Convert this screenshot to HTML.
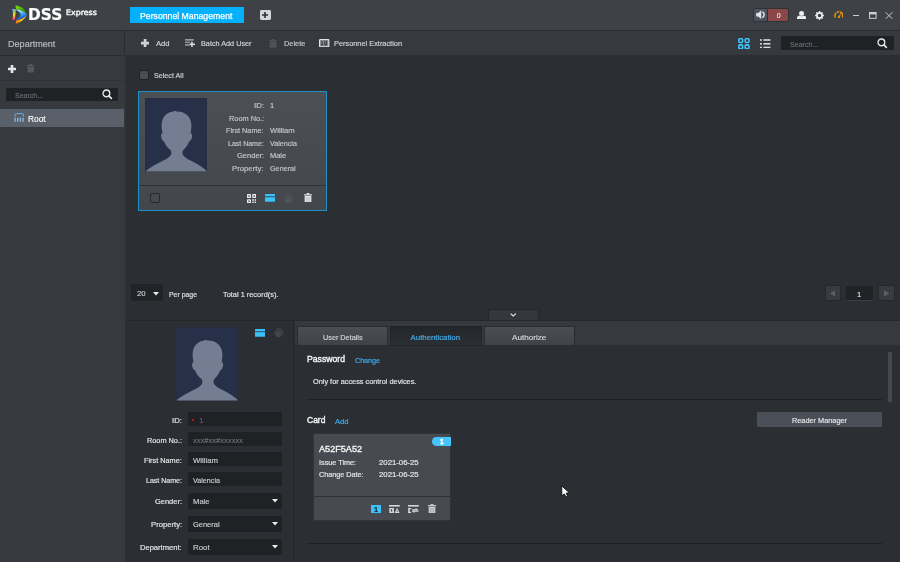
<!DOCTYPE html>
<html lang="en"><head><meta charset="utf-8"><title>DSS Express - Personnel Management</title><style>
*{margin:0;padding:0;box-sizing:content-box}
html,body{width:900px;height:562px;overflow:hidden;background:#2b2e33;font-family:'Liberation Sans', sans-serif;}
#app{position:absolute;left:0;top:0;width:900px;height:562px;overflow:hidden;will-change:transform}
.b{position:absolute;display:block}
.t{-webkit-text-stroke:0.18px currentColor;position:absolute;transform-origin:0 50%;display:block;white-space:pre;font-family:'Liberation Sans', sans-serif;font-weight:400;font-style:normal;background:none;border:0;text-decoration:none}
</style></head>
<body>
<div id="app">
<header><div class="b" style="left:0px;top:0px;width:900px;height:30.3px;background:#3e4146;"></div><svg class="b" style="left:12px;top:5px;" width="15.4" height="19" viewBox="0 0 15.4 19"><defs><linearGradient id="lg1" x1="0" y1="0" x2="1" y2="1"><stop offset="0" stop-color="#8ee000"/><stop offset="0.6" stop-color="#3aa008"/><stop offset="1" stop-color="#1c6a10"/></linearGradient><linearGradient id="lg2" x1="0.3" y1="0" x2="0.6" y2="1"><stop offset="0" stop-color="#b4f4f8"/><stop offset="0.5" stop-color="#38a0f0"/><stop offset="1" stop-color="#0638d8"/></linearGradient><linearGradient id="lg3" x1="1" y1="0" x2="0" y2="1"><stop offset="0" stop-color="#f8e820"/><stop offset="0.5" stop-color="#f8c018"/><stop offset="1" stop-color="#f06410"/></linearGradient><linearGradient id="lg4" x1="0.3" y1="0" x2="0.5" y2="1"><stop offset="0" stop-color="#5ea8f4"/><stop offset="0.3" stop-color="#9ac86a"/><stop offset="0.55" stop-color="#f4dc1c"/><stop offset="0.8" stop-color="#f07a40"/><stop offset="1" stop-color="#d818a4"/></linearGradient></defs><path d="M3.4,0.5 C8.5,0.6 13,4 15.1,9.2 L13.6,8.5 C11.5,6 8,4.3 4.1,4 Z" fill="url(#lg1)"/><path d="M4.3,4.3 C8,4.6 12,6.3 15.1,9.5 C12.5,12.6 8.5,14.5 4.3,14.9 L4.5,13.8 C7,12.8 8.5,11.2 8.5,9.5 C8.5,7.8 7,6.2 4.5,5.2 Z" fill="url(#lg2)"/><path d="M14.7,10.3 C12.5,14.6 8.5,17.8 3.6,18.8 L4.2,15.5 C8.4,15 12,13.2 14.7,10.3 Z" fill="url(#lg3)"/><path d="M0.2,4 L3.8,3.9 L3.1,15.2 L0.5,14.9 C1.2,11 1.2,7 0.2,4 Z" fill="url(#lg4)"/></svg><span class="t" style="left:28.40px;top:6.00px;font-size:15.1px;line-height:18px;color:#ffffff;font-weight:700;font-family:'DejaVu Sans', 'Liberation Sans', sans-serif;transform:scaleX(1.0180);">DSS</span><span class="t" style="left:65.80px;top:8.00px;font-size:7.5px;line-height:9px;color:#f4f4f4;font-family:'DejaVu Sans', 'Liberation Sans', sans-serif;-webkit-text-stroke:0.4px #f4f4f4;transform:scaleX(1.0513);">Express</span><div class="b tab" style="left:130px;top:7px;width:114px;height:16.2px;background:#05b1fa;"></div><span class="t" style="left:140.40px;top:11.00px;font-size:9.2px;line-height:10px;color:#ffffff;-webkit-text-stroke:0.25px #fff;transform:scaleX(0.9471);">Personnel Management</span><div class="b" style="left:260.2px;top:10.2px;width:10.4px;height:9.8px;background:#d3d6da;border-radius:1.4px;"></div><svg class="b" style="left:262.4px;top:12.1px;" width="6" height="6" viewBox="0 0 6 6"><path d="M2.2,0H3.8V2.2H6V3.8H3.8V6H2.2V3.8H0V2.2H2.2Z" fill="#2e3136"/></svg><div class="b" style="left:753.6px;top:8.6px;width:14.4px;height:12.8px;background:#4b535d;border-radius:1.5px 0 0 1.5px;box-shadow:0 0 0 1px #2e3135;"></div><div class="b" style="left:768px;top:8.6px;width:20.2px;height:12.8px;background:#8b4747;border-radius:0 1.5px 1.5px 0;box-shadow:0 0 0 1px #2e3135;"></div><svg class="b" style="left:755.6px;top:10.4px;" width="10.4" height="9.4" viewBox="0 0 10.4 9.4"><path d="M0.2,3H2.2L5.2,0.3V9.1L2.2,6.4H0.2Z" fill="#e2e5e8"/><path d="M6.8,2.2C8.6,3.4 8.6,6 6.8,7.2" fill="none" stroke="#e2e5e8" stroke-width="1.5" stroke-linecap="round"/></svg><span class="t" style="left:776.65px;top:12.00px;font-size:7.0px;line-height:7px;color:#eadada;">0</span><svg class="b" style="left:796.6px;top:10.6px;" width="9.2" height="8.6" viewBox="0 0 9.2 8.6"><circle cx="4.6" cy="2.5" r="2.5" fill="#eceef0"/><path d="M0,8.6V6.6C0,5.2 1.6,4.6 2.8,4.4C3.8,5.4 5.4,5.4 6.4,4.4C7.6,4.6 9.2,5.2 9.2,6.6V8.6Z" fill="#eceef0"/></svg><svg class="b" style="left:815.4px;top:10.7px;" width="9" height="9" viewBox="0 0 9 9"><path d="M8.92,4.01L8.92,4.99L7.86,5.48L7.57,6.19L7.97,7.28L7.28,7.97L6.19,7.57L5.48,7.86L4.99,8.92L4.01,8.92L3.52,7.86L2.81,7.57L1.72,7.97L1.03,7.28L1.43,6.19L1.14,5.48L0.08,4.99L0.08,4.01L1.14,3.52L1.43,2.81L1.03,1.72L1.72,1.03L2.81,1.43L3.52,1.14L4.01,0.08L4.99,0.08L5.48,1.14L6.19,1.43L7.28,1.03L7.97,1.72L7.57,2.81L7.86,3.52Z" fill="#eceef0"/><circle cx="4.5" cy="4.5" r="1.7" fill="#3e4146"/></svg><svg class="b" style="left:833.8px;top:11.4px;" width="9.6" height="7" viewBox="0 0 9.6 7"><path d="M1.2,6.6C0.2,3.4 2,0.8 4.8,0.8S9.4,3.4 8.4,6.6" fill="none" stroke="#e9930c" stroke-width="1.5" stroke-dasharray="5.2 0.8 2.4 0.8 20"/><path d="M3.9,6.2L7.2,1.6L5.7,6.9Z" fill="#e9930c"/><circle cx="4.8" cy="6.2" r="1" fill="#e9930c"/></svg><div class="b" style="left:853px;top:15.3px;width:6.4px;height:1.2px;background:#cdd0d8;"></div><svg class="b" style="left:868.8px;top:12px;" width="7.8" height="6.8" viewBox="0 0 7.8 6.8"><rect x="0.5" y="0.5" width="6.6" height="5.8" fill="none" stroke="#cdd0d8" stroke-width="1"/><rect x="0.5" y="0.5" width="6.6" height="1.9" fill="#cdd0d8"/></svg><svg class="b" style="left:884.8px;top:11.6px;" width="8" height="7.2" viewBox="0 0 8 7.2"><path d="M0.4,0.2L7.6,7M7.6,0.2L0.4,7" stroke="#d4d7de" stroke-width="0.9" fill="none"/></svg></header>
<div class="b" style="left:0px;top:30.3px;width:900px;height:1.1px;background:#292b2f;"></div>
<nav><div class="b" style="left:125px;top:31.3px;width:775px;height:23.7px;background:#36393e;"></div><svg class="b" style="left:140.8px;top:38.6px;" width="8.2" height="8.2" viewBox="0 0 8.2 8.2"><path d="M2.73,0H5.47V2.73H8.2V5.47H5.47V8.2H2.73V5.47H0V2.73H2.73Z" fill="#cfd2d8"/></svg><button class="t" style="left:155.90px;top:39.00px;font-size:7.8px;line-height:9px;color:#d0d3d7;transform:scaleX(0.9802);">Add</button><svg class="b" style="left:185px;top:38.6px;" width="10.2" height="8.6" viewBox="0 0 10.2 8.6"><g fill="#d6d9dd"><rect x="0" y="0.4" width="8.8" height="1.0"/><rect x="0" y="2.7" width="5" height="1.1" opacity="0.75"/><rect x="0" y="5.45" width="4.6" height="1.0"/><rect x="4.6" y="4.5" width="5.5" height="1.6"/><rect x="6.1" y="2.7" width="1.7" height="5.2"/></g></svg><button class="t" style="left:201.20px;top:39.00px;font-size:7.8px;line-height:9px;color:#d0d3d7;transform:scaleX(0.9319);">Batch Add User</button><svg class="b" style="left:268.8px;top:38.8px;" width="8" height="8.8" viewBox="0 0 8 8.8"><g fill="#50545c"><rect x="2.64" y="0" width="2.72" height="1.23"/><rect x="0" y="1.06" width="8" height="1.23" rx="0.4"/><path d="M0.64,2.82H7.36V8.00Q7.36,8.8 6.56,8.8H1.44Q0.64,8.8 0.64,8.00Z"/></g><g stroke="#474a4f" stroke-width="0.5" opacity="0.55"><line x1="2.88" y1="3.70" x2="2.88" y2="7.92"/><line x1="5.12" y1="3.70" x2="5.12" y2="7.92"/></g></svg><button class="t" style="left:283.60px;top:39.00px;font-size:7.8px;line-height:9px;color:#c2c6cb;transform:scaleX(0.9491);">Delete</button><svg class="b" style="left:319.2px;top:38.6px;" width="10.4" height="8.4" viewBox="0 0 10.4 8.4"><rect x="0.55" y="0.55" width="9.3" height="7.3" rx="0.8" fill="#84888f" stroke="#e2e4e7" stroke-width="1.1"/><rect x="2.5" y="2" width="1.1" height="4.2" fill="#3a3d42"/><rect x="2.1" y="5.2" width="1.9" height="1" fill="#3a3d42"/><rect x="5.3" y="1.9" width="2.7" height="4.3" fill="#3a3d42"/><rect x="6.3" y="1.9" width="0.7" height="3" fill="#84888f"/></svg><button class="t" style="left:334.00px;top:39.00px;font-size:7.8px;line-height:9px;color:#d0d3d7;transform:scaleX(0.9451);">Personnel Extraction</button><svg class="b" style="left:737.5px;top:37.6px;" width="12" height="11.4" viewBox="0 0 12 11.4"><g fill="none" stroke="#3fc4fb" stroke-width="1.55"><rect x="0.8" y="0.8" width="3.8" height="3.7" rx="0.9"/><rect x="7.2" y="0.8" width="3.8" height="3.7" rx="0.9"/><rect x="0.8" y="6.9" width="3.8" height="3.7" rx="0.9"/><rect x="7.2" y="6.9" width="3.8" height="3.7" rx="0.9"/></g></svg><svg class="b" style="left:760px;top:38.8px;" width="10.6" height="9.6" viewBox="0 0 10.6 9.6"><g fill="#d8dbe0"><rect x="0" y="0.2" width="1.9" height="1.6"/><rect x="3.4" y="0.2" width="7" height="1.6"/><rect x="0" y="4" width="1.9" height="1.6"/><rect x="3.4" y="4" width="7" height="1.6"/><rect x="0" y="7.7" width="1.9" height="1.6"/><rect x="3.4" y="7.7" width="7" height="1.6"/></g></svg><div class="b" style="left:781px;top:36.4px;width:112.8px;height:13.6px;background:#1f2125;border-radius:1.5px;"></div><span class="t" style="left:790.00px;top:40.00px;font-size:7.9px;line-height:9px;color:#686d75;transform:scaleX(0.8962);">Search...</span><svg class="b" style="left:877px;top:38.4px;" width="11" height="11" viewBox="0 0 11 11"><circle cx="4.4" cy="4.4" r="3.4" fill="none" stroke="#e8eaec" stroke-width="1.3"/><line x1="7.1" y1="7.1" x2="9.4" y2="9.4" stroke="#e8eaec" stroke-width="1.6" stroke-linecap="round"/></svg></nav>
<aside><div class="b" style="left:0px;top:31.3px;width:125px;height:530.7px;background:#36393e;"></div><div class="b" style="left:0px;top:31.3px;width:125px;height:23.7px;background:#36393e;"></div><div class="b" style="left:124.4px;top:31.3px;width:1.0px;height:24px;background:#292b2f;"></div><div class="b" style="left:124.5px;top:55.3px;width:1.0px;height:506.7px;background:#2e3136;"></div><h2 class="t" style="left:8.20px;top:39.00px;font-size:9.2px;line-height:10px;color:#b9bdc3;transform:scaleX(0.9872);">Department</h2><div class="b" style="left:0px;top:54.8px;width:124.4px;height:1px;background:#2a2c30;"></div><svg class="b" style="left:8px;top:64.6px;" width="8" height="8" viewBox="0 0 8 8"><path d="M2.67,0H5.33V2.67H8V5.33H5.33V8H2.67V5.33H0V2.67H2.67Z" fill="#e4e6e8"/></svg><svg class="b" style="left:27.2px;top:64.4px;" width="7.4" height="8.6" viewBox="0 0 7.4 8.6"><g fill="#565a62"><rect x="2.44" y="0" width="2.52" height="1.20"/><rect x="0" y="1.03" width="7.4" height="1.20" rx="0.4"/><path d="M0.59,2.75H6.81V7.80Q6.81,8.6 6.07,8.6H1.33Q0.59,8.6 0.59,7.80Z"/></g><g stroke="#474a4f" stroke-width="0.5" opacity="0.55"><line x1="2.66" y1="3.61" x2="2.66" y2="7.74"/><line x1="4.74" y1="3.61" x2="4.74" y2="7.74"/></g></svg><div class="b" style="left:0px;top:80px;width:124px;height:1px;background:#2f3236;"></div><div class="b" style="left:5.8px;top:88px;width:112.6px;height:13px;background:#1f2125;border-radius:1.5px;"></div><span class="t" style="left:15.00px;top:91.00px;font-size:7.9px;line-height:9px;color:#686d75;transform:scaleX(0.8867);">Search...</span><svg class="b" style="left:101.8px;top:89.4px;" width="11" height="11" viewBox="0 0 11 11"><circle cx="4.4" cy="4.4" r="3.4" fill="none" stroke="#e8eaec" stroke-width="1.3"/><line x1="7.1" y1="7.1" x2="9.4" y2="9.4" stroke="#e8eaec" stroke-width="1.6" stroke-linecap="round"/></svg><div class="b" style="left:0px;top:108.5px;width:124.4px;height:18.3px;background:#5a606a;"></div><svg class="b" style="left:13.6px;top:113.2px;" width="10.4" height="9" viewBox="0 0 10.4 9"><path d="M1,3.5V2Q1,0.6 2.4,0.6H8Q9.4,0.6 9.4,2V3.5" fill="none" stroke="#67aee8" stroke-width="1"/><g fill="#86bdec"><rect x="0.4" y="4.7" width="1.3" height="4.1"/><rect x="3.1" y="4.7" width="1.3" height="4.1"/><rect x="5.8" y="4.7" width="1.3" height="4.1"/><rect x="8.5" y="4.7" width="1.3" height="4.1"/></g></svg><span class="t" style="left:27.80px;top:113.00px;font-size:9.4px;line-height:11px;color:#f4f5f6;transform:scaleX(0.8934);">Root</span></aside>
<main><div class="b" style="left:140.4px;top:70.8px;width:7.8px;height:7.8px;background:#484c55;box-shadow:0 0 0 1px #202226;border-radius:1.2px;"></div><label class="t" style="left:153.80px;top:71.00px;font-size:7.8px;line-height:9px;color:#d0d3d7;transform:scaleX(0.9196);">Select All</label><div class="b" style="left:138px;top:91px;width:189px;height:119.6px;background:#474a4f;box-sizing:border-box;border:1px solid #1c90c8;background:linear-gradient(#4c4f54,#43464b);"></div><div class="b" style="left:139px;top:184.6px;width:187px;height:1px;background:#2e3135;"></div><svg class="b" style="left:145px;top:98px;" width="62" height="74" viewBox="0 0 62 74"><rect width="62" height="74" fill="#273049"/><path d="M0.7,74 L0.7,72.5 C5,69.3 11,65.6 16,63.2 C21,60.8 25,59 26.3,55.5 C26.5,54 26.3,52.5 25.5,51.5 C22.5,49 20.3,46.5 19.2,43.2 C17,42.5 15.6,39 16.2,36.2 C16.4,35.2 17,34.8 17.6,34.8 C16.4,30 16.2,26 17.2,22.5 C18.6,17 23,13.6 27.5,13.2 C28.5,12.5 30.5,12.4 31.5,13 C37,12.6 43.5,15.5 45.6,22 C46.8,26 46.6,30 45.6,34.8 C46.4,34.8 46.9,35.4 47,36.2 C47.5,39 46,42.5 44,43.2 C42.8,46.5 40.8,49 38.3,51.5 C37.5,52.5 37.3,54 37.6,55.5 C39,59 43,60.8 48,63.2 C53,65.6 58,69.3 62,72.5 L62,74 Z" fill="#737e93" transform="translate(0,0.5)"/><rect x="0.25" y="0.25" width="61.5" height="73.5" fill="none" stroke="#2a2d38" stroke-width="0.5"/></svg><span class="t" style="left:253.70px;top:101.00px;font-size:7.6px;line-height:9px;color:#c3c6cb;transform:scaleX(1.0392);">ID:</span><span class="t" style="left:270.03px;top:101.00px;font-size:7.6px;line-height:9px;color:#c3c6cb;">1</span><span class="t" style="left:228.70px;top:114.00px;font-size:7.6px;line-height:9px;color:#c3c6cb;transform:scaleX(0.9670);">Room No.:</span><span class="t" style="left:226.30px;top:126.00px;font-size:7.6px;line-height:9px;color:#c3c6cb;transform:scaleX(0.9554);">First Name:</span><span class="t" style="left:270.30px;top:126.00px;font-size:7.6px;line-height:9px;color:#c3c6cb;transform:scaleX(1.0054);">William</span><span class="t" style="left:228.00px;top:139.00px;font-size:7.6px;line-height:9px;color:#c3c6cb;transform:scaleX(0.9216);">Last Name:</span><span class="t" style="left:270.30px;top:139.00px;font-size:7.6px;line-height:9px;color:#c3c6cb;transform:scaleX(0.9413);">Valencia</span><span class="t" style="left:236.60px;top:151.00px;font-size:7.6px;line-height:9px;color:#c3c6cb;transform:scaleX(0.9908);">Gender:</span><span class="t" style="left:270.30px;top:151.00px;font-size:7.6px;line-height:9px;color:#c3c6cb;transform:scaleX(0.9715);">Male</span><span class="t" style="left:232.40px;top:164.00px;font-size:7.6px;line-height:9px;color:#c3c6cb;transform:scaleX(1.0191);">Property:</span><span class="t" style="left:270.30px;top:164.00px;font-size:7.6px;line-height:9px;color:#c3c6cb;transform:scaleX(0.9508);">General</span><div class="b" style="left:151px;top:194px;width:7.6px;height:7.8px;background:#454952;box-shadow:0 0 0 1px #26282c;border-radius:1.2px;"></div><svg class="b" style="left:246.8px;top:193.6px;" width="9.4" height="9.2" viewBox="0 0 9.4 9.2"><g fill="#e4e6e8"><rect x="0" y="0" width="4" height="4" rx="0.6"/><rect x="5.2" y="0" width="4" height="4" rx="0.6"/><rect x="0" y="5.2" width="4" height="4" rx="0.6"/><rect x="5.2" y="5.2" width="1.6" height="1.6"/><rect x="7.6" y="5.2" width="1.6" height="1.6"/><rect x="5.2" y="7.6" width="1.6" height="1.6"/><rect x="7.6" y="7.6" width="1.6" height="1.6"/></g><g fill="#474a4f"><rect x="1.3" y="1.3" width="1.4" height="1.4"/><rect x="6.5" y="1.3" width="1.4" height="1.4"/><rect x="1.3" y="6.5" width="1.4" height="1.4"/></g></svg><svg class="b" style="left:264.8px;top:194.2px;" width="10.4" height="7.8" viewBox="0 0 10.4 7.8"><rect width="10.4" height="7.8" rx="0.5" fill="#3cc0f8"/><rect y="2.26" width="10.4" height="0.94" fill="#2b2e33" opacity="0.8"/></svg><svg class="b" style="left:284px;top:193.6px;" width="9.4" height="9.4" viewBox="0 0 9.4 9.4"><g fill="none" stroke="#5b5f67" stroke-width="0.65" stroke-linecap="round"><path d="M1,6.6C0.4,3 2,0.6 4.7,0.6S9,3 8.4,6.6"/><path d="M2.6,8C2,4.6 2.8,2.3 4.7,2.3S7.4,4.6 6.8,8"/><path d="M4.7,4V8.8"/><path d="M3.6,8.8C3.3,7 3.4,5 4,4"/><path d="M5.8,8.8C6.1,7 6,5 5.4,4"/></g></svg><svg class="b" style="left:303.6px;top:192.9px;" width="8.0" height="9.6" viewBox="0 0 8.0 9.6"><g fill="#e0e2e5"><rect x="2.64" y="0" width="2.72" height="1.34"/><rect x="0" y="1.15" width="8.0" height="1.34" rx="0.4"/><path d="M0.64,3.07H7.36V8.80Q7.36,9.6 6.56,9.6H1.44Q0.64,9.6 0.64,8.80Z"/></g><g stroke="#474a4f" stroke-width="0.5" opacity="0.55"><line x1="2.88" y1="4.03" x2="2.88" y2="8.64"/><line x1="5.12" y1="4.03" x2="5.12" y2="8.64"/></g></svg><div class="b" style="left:131.4px;top:284px;width:31.4px;height:16.6px;background:#212327;border-radius:1.5px;"></div><span class="t" style="left:137.40px;top:289.00px;font-size:7.9px;line-height:9px;color:#c6cad0;transform:scaleX(0.9794);">20</span><svg class="b" style="left:153px;top:291.8px;" width="6" height="4" viewBox="0 0 6 4"><path d="M0,0H6L3,3.6Z" fill="#e8eaec"/></svg><span class="t" style="left:169.40px;top:290.00px;font-size:7.8px;line-height:9px;color:#dfe1e4;transform:scaleX(0.8845);">Per page</span><span class="t" style="left:222.60px;top:290.00px;font-size:7.8px;line-height:9px;color:#dfe1e4;transform:scaleX(0.9470);">Total 1 record(s).</span><div class="b" style="left:825.6px;top:285.8px;width:14px;height:14.6px;background:#383b40;box-shadow:0 0 0 1px #25272b;"></div><svg class="b" style="left:829.6px;top:289.6px;" width="5.4" height="6.8" viewBox="0 0 5.4 6.8"><path d="M5.4,0V6.8L0,3.4Z" fill="#5a5e66"/></svg><div class="b" style="left:846px;top:285.8px;width:26.6px;height:14.6px;background:#202226;border-radius:1.5px;box-shadow:0 1px 0 0 #3a3d42;"></div><span class="t" style="left:856.93px;top:290.00px;font-size:7.8px;line-height:9px;color:#d5d8dc;">1</span><div class="b" style="left:879px;top:285.8px;width:14.6px;height:14.6px;background:#383b40;box-shadow:0 0 0 1px #25272b;"></div><svg class="b" style="left:884px;top:289.6px;" width="5.4" height="6.8" viewBox="0 0 5.4 6.8"><path d="M0,0V6.8L5.4,3.4Z" fill="#5a5e66"/></svg><div class="b" style="left:489px;top:310px;width:48.6px;height:10.6px;background:#34373c;box-shadow:0 0 0 1px #25272b;"></div><svg class="b" style="left:509.6px;top:313px;" width="6.4" height="4" viewBox="0 0 6.4 4"><path d="M0.6,0.6L3.2,3L5.8,0.6" fill="none" stroke="#e4e6e8" stroke-width="1.1"/></svg></main>
<section><div class="b" style="left:125.4px;top:320.3px;width:774.6px;height:1.2px;background:#25272b;"></div><div class="b" style="left:125.4px;top:321.4px;width:167.6px;height:240.6px;background:#2b2e33;"></div><div class="b" style="left:292.9px;top:321.4px;width:2px;height:240.6px;background:#27292e;"></div><div class="b" style="left:294.9px;top:345px;width:605.1px;height:217px;background:#2b2e33;"></div><div class="b" style="left:294.9px;top:321.4px;width:605.1px;height:23.8px;background:#36393e;"></div><div class="b" style="left:297.8px;top:326.6px;width:89.6px;height:18.6px;background:#45484d;background:linear-gradient(#4b4e53,#3f4247);box-shadow:0 0 0 1px #2a2c30;"></div><div class="b" style="left:391px;top:326.6px;width:89.8px;height:18.6px;background:#272a2e;background:linear-gradient(#23262a,#2b2e33);box-shadow:0 0 0 1px #222428;"></div><div class="b" style="left:485px;top:326.6px;width:89px;height:18.6px;background:#45484d;background:linear-gradient(#4b4e53,#3f4247);box-shadow:0 0 0 1px #2a2c30;"></div><span class="t" style="left:322.70px;top:333.00px;font-size:7.8px;line-height:9px;color:#d0d3d7;transform:scaleX(0.9325);">User Details</span><span class="t" style="left:410.60px;top:333.00px;font-size:7.8px;line-height:9px;color:#44adea;">Authentication</span><span class="t" style="left:512.00px;top:333.00px;font-size:7.8px;line-height:9px;color:#d0d3d7;transform:scaleX(1.0409);">Authorize</span><h3 class="t" style="left:307.00px;top:353.00px;font-size:9.4px;line-height:11px;color:#f4f5f6;-webkit-text-stroke:0.4px #f4f5f6;transform:scaleX(0.9230);">Password</h3><a class="t" style="left:354.60px;top:356.00px;font-size:7.8px;line-height:9px;color:#44adea;transform:scaleX(0.9153);">Change</a><p class="t" style="left:313.00px;top:377.00px;font-size:7.8px;line-height:9px;color:#e4e6e8;transform:scaleX(0.9393);">Only for access control devices.</p><div class="b" style="left:307px;top:399px;width:575px;height:1px;background:#1f2125;"></div><div class="b" style="left:888px;top:352px;width:4px;height:50px;background:#45484d;"></div><h3 class="t" style="left:307.00px;top:414.00px;font-size:9.4px;line-height:11px;color:#f4f5f6;-webkit-text-stroke:0.4px #f4f5f6;transform:scaleX(0.9051);">Card</h3><a class="t" style="left:335.00px;top:417.00px;font-size:7.8px;line-height:9px;color:#44adea;transform:scaleX(0.9802);">Add</a><div class="b" style="left:757px;top:412.2px;width:125.2px;height:15px;background:#4b5058;border-radius:1px;"></div><button class="t" style="left:791.60px;top:416.00px;font-size:7.8px;line-height:9px;color:#e4e6e8;transform:scaleX(0.9399);">Reader Manager</button><div class="b" style="left:314px;top:434px;width:136.2px;height:86.4px;background:#474a50;box-shadow:0 0 0 1px #303338;"></div><div class="b" style="left:314px;top:495.8px;width:136.2px;height:1px;background:#2e3135;"></div><div class="b" style="left:432.2px;top:436.6px;width:18.8px;height:9.2px;background:#46c4fc;border-radius:4.6px 0 0 4.6px;"></div><span class="t" style="left:439.84px;top:437.00px;font-size:7.4px;line-height:9px;color:#ffffff;-webkit-text-stroke:0.5px #fff;">1</span><h4 class="t" style="left:319.20px;top:443.00px;font-size:9.4px;line-height:11px;color:#f4f5f6;-webkit-text-stroke:0.35px #f4f5f6;transform:scaleX(0.9726);">A52F5A52</h4><span class="t" style="left:318.90px;top:458.00px;font-size:7.6px;line-height:9px;color:#e6e8ea;transform:scaleX(0.9555);">Issue Time:</span><span class="t" style="left:379.20px;top:458.00px;font-size:7.6px;line-height:9px;color:#e6e8ea;transform:scaleX(1.0216);">2021-06-25</span><span class="t" style="left:319.00px;top:470.00px;font-size:7.6px;line-height:9px;color:#e6e8ea;transform:scaleX(0.9472);">Change Date:</span><span class="t" style="left:379.20px;top:470.00px;font-size:7.6px;line-height:9px;color:#e6e8ea;transform:scaleX(1.0216);">2021-06-25</span><div class="b" style="left:370.8px;top:505px;width:10.2px;height:7.8px;background:#3cc2f9;"></div><span class="t" style="left:373.94px;top:505.00px;font-size:7.4px;line-height:9px;color:#17222c;font-weight:700;">1</span><svg class="b" style="left:389px;top:504.8px;" width="10.8" height="8.2" viewBox="0 0 10.8 8.2"><g fill="#d4d7db"><rect x="0" y="0" width="10.8" height="1.6"/><rect x="0.3" y="3" width="4.6" height="5"/><path d="M5.6,8L8.1,2.8L10.6,8Z"/></g><rect x="1.9" y="4.2" width="1.3" height="2.4" fill="#45484d"/><rect x="7.75" y="5.4" width="0.8" height="1.7" fill="#45484d"/></svg><svg class="b" style="left:407.8px;top:504.8px;" width="10.8" height="8.2" viewBox="0 0 10.8 8.2"><g fill="#d4d7db"><rect x="0" y="0" width="10.8" height="1.6"/><rect x="0.2" y="3" width="1.6" height="5"/><rect x="0.2" y="3" width="3" height="1.1"/><rect x="0.2" y="6.9" width="3" height="1.1"/><path d="M3.8,4.3H7.6V3L10.6,5L8.6,5.6H3.8Z"/><path d="M10.4,6.7H6.6V8L3.6,6L5.6,5.4H10.4Z"/></g></svg><svg class="b" style="left:428.2px;top:504.0px;" width="8" height="9.2" viewBox="0 0 8 9.2"><g fill="#c6c9ce"><rect x="2.64" y="0" width="2.72" height="1.29"/><rect x="0" y="1.10" width="8" height="1.29" rx="0.4"/><path d="M0.64,2.94H7.36V8.40Q7.36,9.2 6.56,9.2H1.44Q0.64,9.2 0.64,8.40Z"/></g><g stroke="#474a4f" stroke-width="0.5" opacity="0.55"><line x1="2.88" y1="3.86" x2="2.88" y2="8.28"/><line x1="5.12" y1="3.86" x2="5.12" y2="8.28"/></g></svg><div class="b" style="left:307px;top:543px;width:575px;height:1px;background:#1f2125;"></div><svg class="b" style="left:561.2px;top:484.8px;" width="10" height="13" viewBox="0 0 10 13"><path d="M0.8,0.9V11L3.2,8.9L5,11.8L6.6,11L5.1,8.2L8.3,7.7Z" fill="#ffffff" stroke="#0c0e12" stroke-width="0.9" stroke-linejoin="round"/></svg><svg class="b" style="left:175.7px;top:327.3px;" width="62" height="74" viewBox="0 0 62 74"><rect width="62" height="74" fill="#273049"/><path d="M0.7,74 L0.7,72.5 C5,69.3 11,65.6 16,63.2 C21,60.8 25,59 26.3,55.5 C26.5,54 26.3,52.5 25.5,51.5 C22.5,49 20.3,46.5 19.2,43.2 C17,42.5 15.6,39 16.2,36.2 C16.4,35.2 17,34.8 17.6,34.8 C16.4,30 16.2,26 17.2,22.5 C18.6,17 23,13.6 27.5,13.2 C28.5,12.5 30.5,12.4 31.5,13 C37,12.6 43.5,15.5 45.6,22 C46.8,26 46.6,30 45.6,34.8 C46.4,34.8 46.9,35.4 47,36.2 C47.5,39 46,42.5 44,43.2 C42.8,46.5 40.8,49 38.3,51.5 C37.5,52.5 37.3,54 37.6,55.5 C39,59 43,60.8 48,63.2 C53,65.6 58,69.3 62,72.5 L62,74 Z" fill="#737e93" transform="translate(0,0.5)"/><rect x="0.25" y="0.25" width="61.5" height="73.5" fill="none" stroke="#2a2d38" stroke-width="0.5"/></svg><svg class="b" style="left:254.6px;top:329.4px;" width="10.4" height="7.8" viewBox="0 0 10.4 7.8"><rect width="10.4" height="7.8" rx="0.5" fill="#3cc0f8"/><rect y="2.26" width="10.4" height="0.94" fill="#2b2e33" opacity="0.8"/></svg><svg class="b" style="left:274px;top:328.4px;" width="9.4" height="9.4" viewBox="0 0 9.4 9.4"><g fill="none" stroke="#5b5f67" stroke-width="0.65" stroke-linecap="round"><path d="M1,6.6C0.4,3 2,0.6 4.7,0.6S9,3 8.4,6.6"/><path d="M2.6,8C2,4.6 2.8,2.3 4.7,2.3S7.4,4.6 6.8,8"/><path d="M4.7,4V8.8"/><path d="M3.6,8.8C3.3,7 3.4,5 4,4"/><path d="M5.8,8.8C6.1,7 6,5 5.4,4"/></g></svg><label class="t" style="left:171.80px;top:416.00px;font-size:7.6px;line-height:9px;color:#e4e6e8;transform:scaleX(1.0186);">ID:</label><div class="b" style="left:188px;top:412px;width:94px;height:14px;background:#1f2125;border-radius:1.5px;"></div><label class="t" style="left:146.70px;top:436.00px;font-size:7.6px;line-height:9px;color:#e4e6e8;transform:scaleX(0.9643);">Room No.:</label><div class="b" style="left:188px;top:432px;width:94px;height:14px;background:#1f2125;border-radius:1.5px;"></div><label class="t" style="left:143.90px;top:456.00px;font-size:7.6px;line-height:9px;color:#e4e6e8;transform:scaleX(0.9631);">First Name:</label><div class="b" style="left:188px;top:452px;width:94px;height:14px;background:#1f2125;border-radius:1.5px;"></div><label class="t" style="left:145.80px;top:476.00px;font-size:7.6px;line-height:9px;color:#e4e6e8;transform:scaleX(0.9242);">Last Name:</label><div class="b" style="left:188px;top:472px;width:94px;height:14px;background:#1f2125;border-radius:1.5px;"></div><label class="t" style="left:154.70px;top:497.00px;font-size:7.6px;line-height:9px;color:#e4e6e8;transform:scaleX(0.9835);">Gender:</label><div class="b" style="left:188px;top:493px;width:94px;height:15.5px;background:#1f2125;border-radius:1.5px;"></div><svg class="b" style="left:272.2px;top:499.15px;" width="6" height="4" viewBox="0 0 6 4"><path d="M0,0H6L3,3.6Z" fill="#e8eaec"/></svg><label class="t" style="left:150.50px;top:520.00px;font-size:7.6px;line-height:9px;color:#e4e6e8;transform:scaleX(1.0126);">Property:</label><div class="b" style="left:188px;top:516px;width:94px;height:15.5px;background:#1f2125;border-radius:1.5px;"></div><svg class="b" style="left:272.2px;top:522.15px;" width="6" height="4" viewBox="0 0 6 4"><path d="M0,0H6L3,3.6Z" fill="#e8eaec"/></svg><label class="t" style="left:140.10px;top:543.00px;font-size:7.6px;line-height:9px;color:#e4e6e8;transform:scaleX(0.9953);">Department:</label><div class="b" style="left:188px;top:539px;width:94px;height:15.5px;background:#1f2125;border-radius:1.5px;"></div><svg class="b" style="left:272.2px;top:545.15px;" width="6" height="4" viewBox="0 0 6 4"><path d="M0,0H6L3,3.6Z" fill="#e8eaec"/></svg><div class="b" style="left:191.7px;top:418.8px;width:2.2px;height:2.2px;background:#e8141c;border-radius:1.1px;"></div><span class="t" style="left:199.18px;top:416.00px;font-size:7.6px;line-height:9px;color:#5b6068;">1</span><span class="t" style="left:193.00px;top:436.00px;font-size:7.6px;line-height:9px;color:#686c74;transform:scaleX(0.9956);">xxx#xx#xxxxxx</span><span class="t" style="left:193.00px;top:456.00px;font-size:7.6px;line-height:9px;color:#c6c9ce;transform:scaleX(1.0217);">William</span><span class="t" style="left:193.00px;top:476.00px;font-size:7.6px;line-height:9px;color:#c6c9ce;transform:scaleX(0.9448);">Valencia</span><span class="t" style="left:193.40px;top:497.00px;font-size:7.6px;line-height:9px;color:#c6c9ce;transform:scaleX(1.0080);">Male</span><span class="t" style="left:193.40px;top:520.00px;font-size:7.6px;line-height:9px;color:#c6c9ce;transform:scaleX(0.9840);">General</span><span class="t" style="left:193.40px;top:543.00px;font-size:7.6px;line-height:9px;color:#c6c9ce;transform:scaleX(1.0345);">Root</span></section>
</div>
</body></html>
